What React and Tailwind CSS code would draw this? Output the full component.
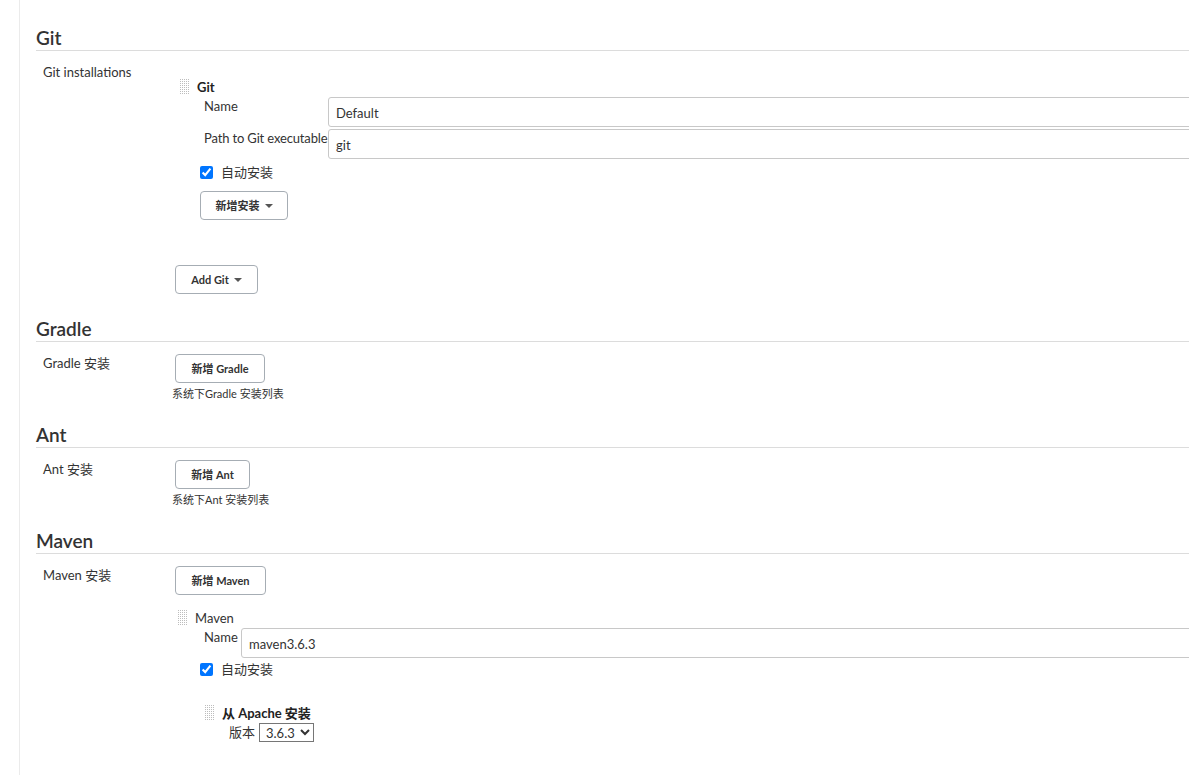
import React from 'react'

const font = { fontFamily: '"Segoe UI", Lato, "Noto Sans CJK SC", sans-serif' }

function Handle() {
  return (
    <svg width="10" height="16" viewBox="0 0 10 16" className="shrink-0">
      {[0, 1, 2, 3, 4].map((c) =>
        [0, 1, 2, 3, 4, 5, 6, 7].map((r) => (
          <rect key={c + '-' + r} x={c * 2} y={r * 2} width="1" height="1" fill="#bdbdbd" />
        ))
      )}
    </svg>
  )
}

function Caret() {
  return <span className="inline-block ml-[5px] align-middle border-x-[4px] border-x-transparent border-t-[4px] border-t-[#555] relative -top-[1px]" />
}

function Btn({ children, caret, className = '' }) {
  return (
    <button className={`block h-[29px] border border-[#a6adb4] rounded-[4px] bg-white text-[11px] leading-[14px] font-bold text-[#333] ${className}`}>
      {children}
      {caret && <Caret />}
    </button>
  )
}

function Section({ title, children }) {
  return (
    <div>
      <h2 className="text-[19px] font-semibold text-[#333] leading-[24px] border-b border-[#dcdcdc]">{title}</h2>
      {children}
    </div>
  )
}

function Check() {
  return (
    <label className="flex items-center gap-[8px] h-[20px] text-[13px] leading-[20px] text-[#333]">
      <input type="checkbox" defaultChecked className="w-[13px] h-[13px] accent-[#0075ff] m-0" />
      自动安装
    </label>
  )
}

function Input({ value }) {
  return (
    <div className="flex-1 h-[30px] border border-[#c8c8c8] rounded-l-[3px] bg-white flex items-center px-[7px] pt-[3px] text-[13px] text-[#333] mt-[1px]">
      {value}
    </div>
  )
}

function Tool({ label, btn, btnW, desc }) {
  return (
    <div className="flex pt-[11px]">
      <div className="w-[139px] shrink-0 pl-[7px] text-[13px] leading-[20px] text-[#333]">{label}</div>
      <div className="pt-[1px]">
        <Btn className={btnW}>{btn}</Btn>
        <div className="text-[11px] text-[#333] -ml-[3px] leading-[14px] mt-[4px]">{desc}</div>
      </div>
    </div>
  )
}

export default function App() {
  return (
    <div className="w-[1189px] h-[775px] overflow-hidden bg-white flex" style={font}>
      <div className="w-[20px] shrink-0 border-r border-[#ebebeb]" />
      <div className="w-[1180px] shrink-0 pl-[16px] pt-[26px]">
        <Section title="Git">
          <div className="flex pt-[11px]">
            <div className="w-[139px] shrink-0 pl-[7px] text-[13px] leading-[20px] text-[#333]">Git installations</div>
            <div className="flex-1">
              <div className="pl-[5px] pt-[17px]">
                <div className="flex items-center gap-[7px] h-[16px]">
                  <Handle />
                  <span className="text-[13px] leading-[16px] font-bold text-[#222]">Git</span>
                </div>
                <div className="pl-[24px] pt-[1px]">
                  <div className="flex">
                    <div className="w-[124px] text-[13px] text-[#333] leading-[20px]">Name</div>
                    <Input value="Default" />
                  </div>
                  <div className="flex mt-[1px]">
                    <div className="w-[124px] text-[13px] text-[#333] leading-[20px] whitespace-nowrap tracking-[-0.15px]">Path to Git executable</div>
                    <Input value="git" />
                  </div>
                </div>
                <div className="pl-[20px] pt-[3px]">
                  <Check />
                  <Btn caret className="mt-[9px] w-[88px]">新增安装</Btn>
                </div>
              </div>
              <Btn caret className="mt-[45px] w-[83px]">Add Git</Btn>
            </div>
          </div>
        </Section>

        <div className="mt-[23px]">
          <Section title="Gradle">
            <Tool label="Gradle 安装" btn="新增 Gradle" btnW="w-[90px]" desc="系统下Gradle 安装列表" />
          </Section>
        </div>

        <div className="mt-[22px]">
          <Section title="Ant">
            <Tool label="Ant 安装" btn="新增 Ant" btnW="w-[75px]" desc="系统下Ant 安装列表" />
          </Section>
        </div>

        <div className="mt-[22px]">
          <Section title="Maven">
            <div className="flex pt-[11px]">
              <div className="w-[139px] shrink-0 pl-[7px] text-[13px] leading-[20px] text-[#333]">Maven 安装</div>
              <div className="flex-1 pt-[1px]">
                <Btn className="w-[91px]">新增 Maven</Btn>
                <div className="pl-[3px] pt-[15px]">
                  <div className="flex items-center gap-[7px] h-[16px]">
                    <Handle />
                    <span className="text-[13px] leading-[16px] text-[#333]">Maven</span>
                  </div>
                  <div className="pl-[26px] flex pt-[1px]">
                    <div className="w-[37px] text-[13px] text-[#333] leading-[20px]">Name</div>
                    <Input value="maven3.6.3" />
                  </div>
                  <div className="pl-[22px] pt-[1px]">
                    <Check />
                  </div>
                  <div className="pl-[27px] pt-[26px]">
                    <div className="flex items-center gap-[7px] h-[16px]">
                      <Handle />
                      <span className="text-[13px] leading-[16px] font-bold text-[#222]">从 Apache 安装</span>
                    </div>
                    <div className="flex items-center h-[20px] pl-[24px] mt-[1px]">
                      <span className="text-[13px] leading-[20px] text-[#333] mr-[4px]">版本</span>
                      <select className="h-[19px] w-[55px] border border-[#767676] text-[13px] leading-[17px] text-[#333] bg-white pl-[2px]">
                        <option>3.6.3</option>
                      </select>
                    </div>
                  </div>
                </div>
              </div>
            </div>
          </Section>
        </div>
      </div>
    </div>
  )
}
